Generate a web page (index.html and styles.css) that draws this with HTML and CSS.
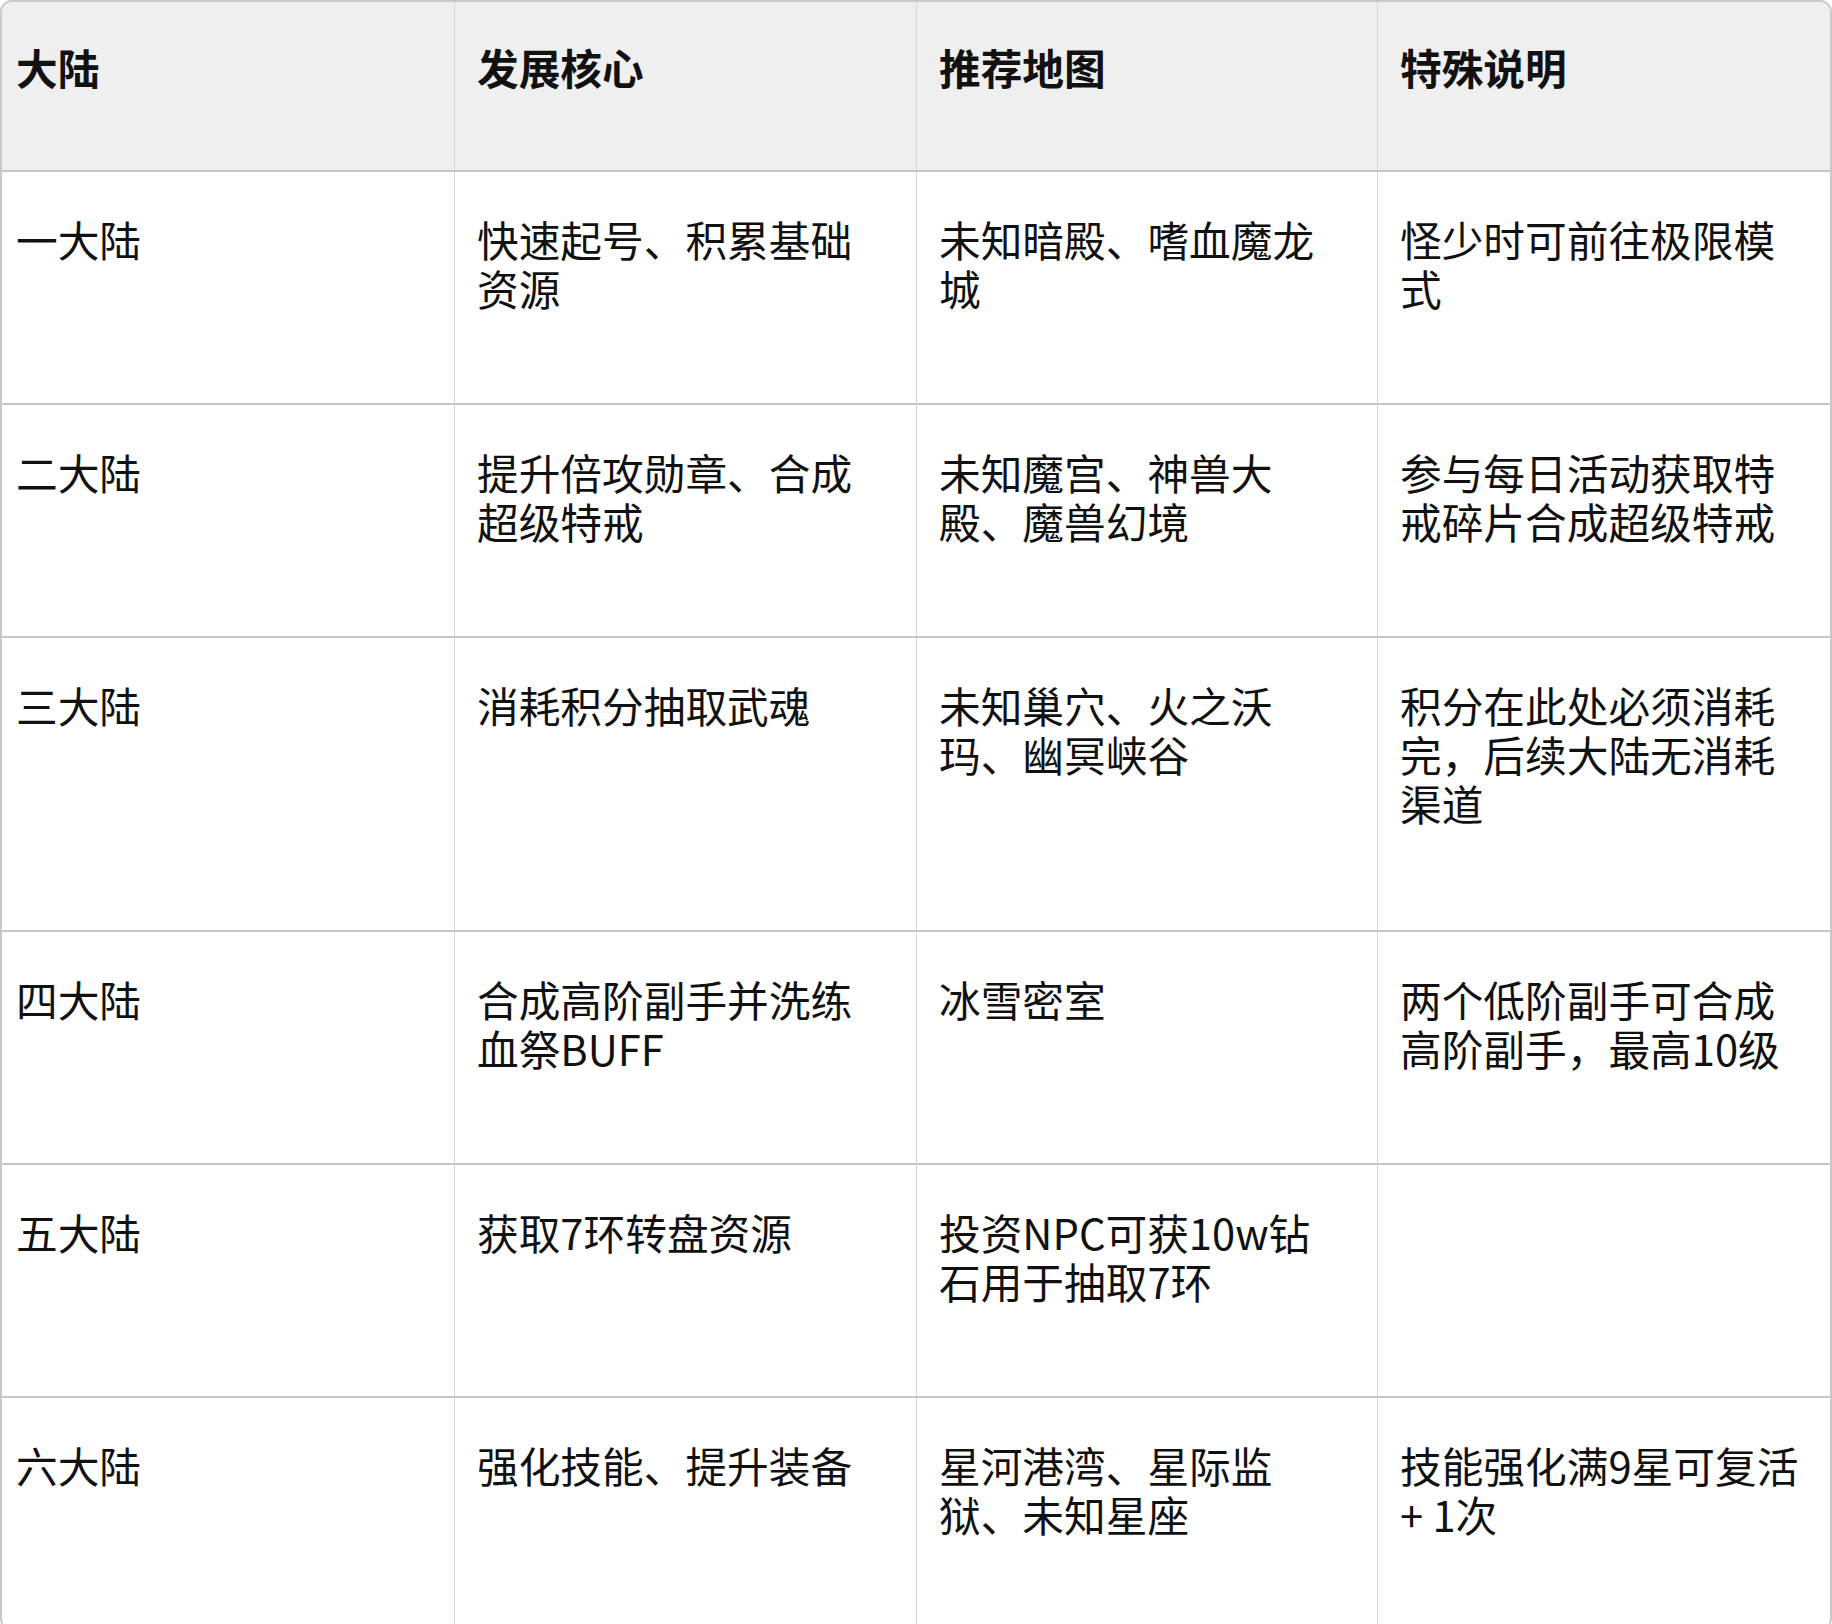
FILE: index.html
```html
<!DOCTYPE html>
<html lang="zh-CN">
<head>
<meta charset="utf-8">
<title>大陆发展指南</title>
<link rel="stylesheet" href="styles.css">
</head>
<body>
<div class="table-wrap">
  <table class="guide">
    <colgroup>
      <col class="c1">
      <col class="c2">
      <col class="c3">
      <col class="c4">
    </colgroup>
    <thead>
      <tr>
        <th>大陆</th>
        <th>发展核心</th>
        <th>推荐地图</th>
        <th>特殊说明</th>
      </tr>
    </thead>
    <tbody>
      <tr>
        <td>一大陆</td>
        <td>快速起号、积累基础资源</td>
        <td>未知暗殿、嗜血魔龙城</td>
        <td>怪少时可前往极限模式</td>
      </tr>
      <tr>
        <td>二大陆</td>
        <td>提升倍攻勋章、合成超级特戒</td>
        <td>未知魔宫、神兽大殿、魔兽幻境</td>
        <td>参与每日活动获取特戒碎片合成超级特戒</td>
      </tr>
      <tr class="tall">
        <td>三大陆</td>
        <td>消耗积分抽取武魂</td>
        <td>未知巢穴、火之沃玛、幽冥峡谷</td>
        <td>积分在此处必须消耗完，后续大陆无消耗渠道</td>
      </tr>
      <tr>
        <td>四大陆</td>
        <td>合成高阶副手并洗练血祭BUFF</td>
        <td>冰雪密室</td>
        <td>两个低阶副手可合成高阶副手，最高10级</td>
      </tr>
      <tr>
        <td>五大陆</td>
        <td>获取7环转盘资源</td>
        <td>投资NPC可获10w钻石用于抽取7环</td>
        <td></td>
      </tr>
      <tr>
        <td>六大陆</td>
        <td>强化技能、提升装备</td>
        <td>星河港湾、星际监狱、未知星座</td>
        <td>技能强化满9星可复活+ 1次</td>
      </tr>
    </tbody>
  </table>
</div>
</body>
</html>
```

FILE: styles.css
```css
html, body {
  margin: 0;
  padding: 0;
  background: #ffffff;
}

body {
  font-family: "Noto Sans CJK SC", "Noto Sans", sans-serif;
  color: #111111;
}

.table-wrap {
  width: 1832px;
  box-sizing: border-box;
  border: 2px solid #c9c9c9;
  border-radius: 12px;
  overflow: hidden;
}

.guide {
  width: 1828px;
  table-layout: fixed;
  border-collapse: separate;
  border-spacing: 0;
  font-size: 41.7px;
  line-height: 49px;
}

.c1 { width: 452px; }
.c2 { width: 462px; }
.c3 { width: 461px; }
.c4 { width: 453px; }

.guide th,
.guide td {
  text-align: left;
  vertical-align: top;
  padding: 43px 28px 0 22px;
  border-left: 1px solid #d4d4d4;
}

.guide th:first-child,
.guide td:first-child {
  border-left: none;
  padding-left: 14px;
}

.guide td:last-child,
.guide th:last-child {
  padding-right: 24px;
}

.guide thead tr {
  height: 168px;
}

.guide th {
  background: #efefef;
  font-weight: 700;
  padding-top: 41px;
}

.guide td {
  border-top: 2px solid #c6c6c6;
}

.guide tbody tr {
  height: 233px;
}

.guide tbody tr.tall {
  height: 294px;
}
```
